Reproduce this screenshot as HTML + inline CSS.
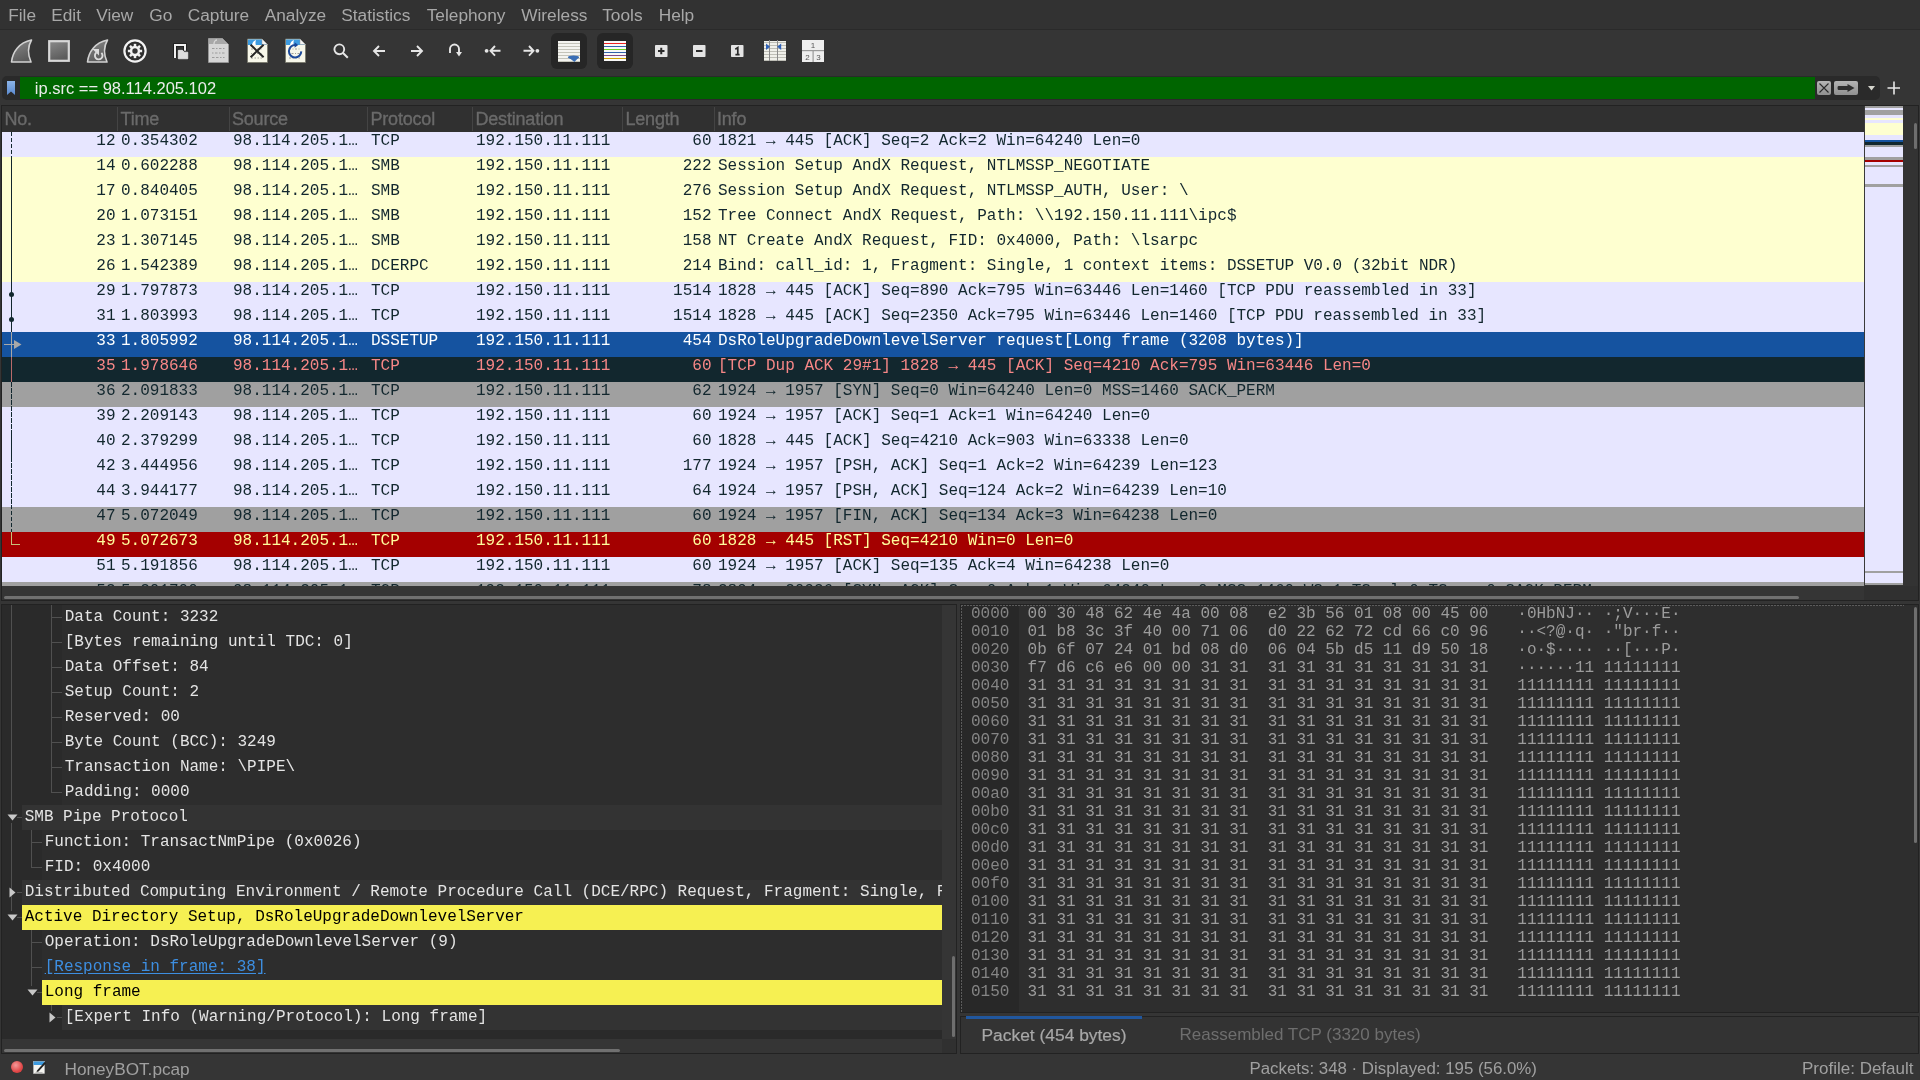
<!DOCTYPE html><html><head><meta charset="utf-8"><title>Wireshark</title><style>
*{margin:0;padding:0;box-sizing:border-box}
html,body{width:1920px;height:1080px;overflow:hidden;background:#353535}
body{position:relative;font-family:"Liberation Sans",sans-serif;-webkit-font-smoothing:antialiased}
.a{position:absolute}
.m{font-family:"Liberation Mono",monospace;font-size:16px;white-space:pre;line-height:18px}
.s{font-family:"Liberation Sans",sans-serif;white-space:pre}
.menu{font-size:17.3px;color:#a8a8a8;line-height:20px}
.hd{font-size:16.8px;color:#6a6a6a;line-height:20px;-webkit-text-stroke:0.35px #6a6a6a}
.row{position:absolute;left:2px;width:1862px;height:25px}
</style></head><body><div class="a" style="left:0;top:0;width:1920px;height:1080px;will-change:transform"><div class="a" style="left:0px;top:0px;width:1920px;height:29px;background:#323232"></div><div class="a" style="left:0px;top:29px;width:1920px;height:1px;background:#2a2a2a"></div><div class="a s menu" style="left:8.2px;top:5.2px;">File</div><div class="a s menu" style="left:51.2px;top:5.2px;">Edit</div><div class="a s menu" style="left:96.2px;top:5.2px;">View</div><div class="a s menu" style="left:149.2px;top:5.2px;">Go</div><div class="a s menu" style="left:187.7px;top:5.2px;">Capture</div><div class="a s menu" style="left:264.7px;top:5.2px;">Analyze</div><div class="a s menu" style="left:341.2px;top:5.2px;">Statistics</div><div class="a s menu" style="left:426.7px;top:5.2px;">Telephony</div><div class="a s menu" style="left:521.2px;top:5.2px;">Wireless</div><div class="a s menu" style="left:602.2px;top:5.2px;">Tools</div><div class="a s menu" style="left:658.7px;top:5.2px;">Help</div><svg class="a" style="left:10px;top:39px" width="23" height="24" viewBox="0 0 23 24"><defs><linearGradient id="gf" x1="0" y1="0" x2="0.4" y2="1"><stop offset="0" stop-color="#8a8a8a"/><stop offset="1" stop-color="#5c5c5c"/></linearGradient></defs><path d="M1.5,23 C2.5,13 9,3.5 21.5,1 C18,7 17.5,15 21,23 Z" fill="url(#gf)" stroke="#d2d2d2" stroke-width="1.6" stroke-linejoin="round"/></svg><svg class="a" style="left:48px;top:40px" width="22" height="22" viewBox="0 0 22 22"><defs><linearGradient id="gf" x1="0" y1="0" x2="0.4" y2="1"><stop offset="0" stop-color="#8a8a8a"/><stop offset="1" stop-color="#5c5c5c"/></linearGradient></defs><rect x="1.2" y="1.2" width="19.6" height="19.6" fill="url(#gf)" stroke="#d8d8d8" stroke-width="2.2"/></svg><svg class="a" style="left:86px;top:39px" width="23" height="24" viewBox="0 0 23 24"><defs><linearGradient id="gf" x1="0" y1="0" x2="0.4" y2="1"><stop offset="0" stop-color="#8a8a8a"/><stop offset="1" stop-color="#5c5c5c"/></linearGradient></defs><path d="M1.5,23 C2.5,13 9,3.5 21.5,1 C18,7 17.5,15 21,23 Z" fill="url(#gf)" stroke="#d2d2d2" stroke-width="1.6" stroke-linejoin="round"/><path d="M15.4,13.9 A3.8,3.8 0 1 1 10.4,13.6" fill="none" stroke="#dcdcdc" stroke-width="1.9"/><path d="M6.5,10 L13,10 L13,16.5 Z" fill="#dcdcdc"/></svg><svg class="a" style="left:123px;top:39px" width="24" height="24" viewBox="0 0 24 24"><circle cx="12" cy="12" r="10.6" fill="#2e2e2e" stroke="#f4f4f4" stroke-width="2.2"/><circle cx="12" cy="12" r="5.2" fill="#f2f2f2"/><rect x="16.65" y="10.75" width="2.5" height="2.5" transform="rotate(0 17.90 12.00)" fill="#f2f2f2"/><rect x="14.92" y="14.92" width="2.5" height="2.5" transform="rotate(45 16.17 16.17)" fill="#f2f2f2"/><rect x="10.75" y="16.65" width="2.5" height="2.5" transform="rotate(90 12.00 17.90)" fill="#f2f2f2"/><rect x="6.58" y="14.92" width="2.5" height="2.5" transform="rotate(135 7.83 16.17)" fill="#f2f2f2"/><rect x="4.85" y="10.75" width="2.5" height="2.5" transform="rotate(180 6.10 12.00)" fill="#f2f2f2"/><rect x="6.58" y="6.58" width="2.5" height="2.5" transform="rotate(225 7.83 7.83)" fill="#f2f2f2"/><rect x="10.75" y="4.85" width="2.5" height="2.5" transform="rotate(270 12.00 6.10)" fill="#f2f2f2"/><rect x="14.92" y="6.58" width="2.5" height="2.5" transform="rotate(315 16.17 7.83)" fill="#f2f2f2"/><circle cx="12" cy="12" r="2.7" fill="#333"/></svg><svg class="a" style="left:173px;top:43px" width="17" height="17" viewBox="0 0 17 17"><path d="M2,15 V2 H12 V7.8" fill="none" stroke="#1c1c1c" stroke-width="3.6"/><path d="M2,15 V2 H12 V7.8" fill="none" stroke="#f0f0f0" stroke-width="2"/><path d="M4.5,6.5 H10 L11.5,8.5 H15.5 V16.5 H4.5 Z" fill="#1c1c1c"/><path d="M5.3,7.3 H9.6 L11,9.2 H14.8 V15.8 H5.3 Z" fill="#dedede" stroke="#eeeeee" stroke-width="0.8"/></svg><svg class="a" style="left:208px;top:38px" width="21" height="25" viewBox="0 0 21 25"><path d="M0.5,0.5 H14.5 L20.5,6.5 V24.5 H0.5 Z" fill="#d6d6d6" stroke="#9a9a9a" stroke-width="0.8"/><path d="M0.8,0.8 H14.3 L19.5,6 H0.8 Z" fill="#a8a8a8"/><path d="M6,6 C6,3 8,2 9,2" stroke="#d6d6d6" stroke-width="1.4" fill="none"/><g fill="none" stroke="#9c9c9c" stroke-width="1"><path d="M4,10.5 h2.5 M8,10.5 h1.5 M11,10.5 h2.5 M15,10.5 h1.5"/><path d="M4,15 h1.5 M7,15 h2.5 M11,15 h1.5 M14,15 h2.5"/><path d="M4,19.5 h2.5 M8,19.5 h2.5 M12,19.5 h1.5 M15,19.5 h1.5"/></g></svg><svg class="a" style="left:247px;top:38px" width="21" height="25" viewBox="0 0 21 25"><path d="M0.5,1 H15 L20.5,6.5 V24.5 H0.5 Z" fill="#f7f7ea" stroke="#77776a" stroke-width="0.8"/><path d="M1,1.5 H14.8 L19.8,6.5 V7 H1 Z" fill="#3d9be0"/><path d="M5,7 C5.4,4.4 6.8,2.6 9,2 C8.4,3.6 8.3,5.4 8.8,7 Z" fill="#ffffff"/><path d="M15,1 V6.5 H20.5 Z" fill="#f4f4f4" stroke="#999" stroke-width="0.5"/><g fill="none" stroke="#a0a098" stroke-width="1"><path d="M4,11 h2 M7.5,11 h1 M10,11 h2 M13.5,11 h1"/><path d="M4,15.5 h1 M6.5,15.5 h2 M10,15.5 h1 M12.5,15.5 h2"/><path d="M4,20 h2 M7.5,20 h1.5 M10.5,20 h1.5 M13.5,20 h1.5"/></g><path d="M3.6,6.8 L16.6,19.2 M16.6,6.8 L3.6,19.2" stroke="#262626" stroke-width="2"/></svg><svg class="a" style="left:285px;top:38px" width="21" height="25" viewBox="0 0 21 25"><path d="M0.5,1 H15 L20.5,6.5 V24.5 H0.5 Z" fill="#f7f7ea" stroke="#77776a" stroke-width="0.8"/><path d="M1,1.5 H14.8 L19.8,6.5 V7 H1 Z" fill="#3d9be0"/><path d="M5,7 C5.4,4.4 6.8,2.6 9,2 C8.4,3.6 8.3,5.4 8.8,7 Z" fill="#ffffff"/><path d="M15,1 V6.5 H20.5 Z" fill="#f4f4f4" stroke="#999" stroke-width="0.5"/><g fill="none" stroke="#a0a098" stroke-width="1"><path d="M4,11 h2 M7.5,11 h1 M10,11 h2 M13.5,11 h1"/><path d="M4,15.5 h1 M6.5,15.5 h2 M10,15.5 h1 M12.5,15.5 h2"/><path d="M4,20 h2 M7.5,20 h1.5 M10.5,20 h1.5 M13.5,20 h1.5"/></g><path d="M10.2,7 A6.2,6.2 0 1 0 16.3,13.4" fill="none" stroke="#1d4a9a" stroke-width="2"/><path d="M9.6,4.2 L13.2,7 L9.6,9.8 Z" fill="#1d4a9a"/></svg><svg class="a" style="left:333px;top:43px" width="16" height="16" viewBox="0 0 16 16"><circle cx="6.3" cy="6.3" r="4.9" fill="none" stroke="#e6e6e6" stroke-width="1.9"/><path d="M9.8,9.8 L14.8,14.8" stroke="#e6e6e6" stroke-width="2"/></svg><svg class="a" style="left:372px;top:44px" width="14" height="14" viewBox="0 0 14 14"><path d="M13,7 H2 M7,2 L2,7 L7,12" fill="none" stroke="#e6e6e6" stroke-width="1.9"/></svg><svg class="a" style="left:410px;top:44px" width="14" height="14" viewBox="0 0 14 14"><path d="M1,7 H12 M7,2 L12,7 L7,12" fill="none" stroke="#e6e6e6" stroke-width="1.9"/></svg><svg class="a" style="left:448px;top:43px" width="14" height="15" viewBox="0 0 14 15"><path d="M2,10 V6 A4.5,4.5 0 0 1 11,6 V9" fill="none" stroke="#e6e6e6" stroke-width="1.9"/><path d="M8,9 H14 L11,13.5 Z" fill="#e6e6e6"/></svg><svg class="a" style="left:484px;top:44px" width="18" height="14" viewBox="0 0 18 14"><circle cx="2.6" cy="6.8" r="1.9" fill="#e6e6e6"/><path d="M16.5,6.8 H6.5 M11,2 L6.5,6.8 L11,11.6" fill="none" stroke="#e6e6e6" stroke-width="1.9"/></svg><svg class="a" style="left:522px;top:44px" width="18" height="14" viewBox="0 0 18 14"><circle cx="15.4" cy="6.8" r="1.9" fill="#e6e6e6"/><path d="M1.5,6.8 H11.5 M7,2 L11.5,6.8 L7,11.6" fill="none" stroke="#e6e6e6" stroke-width="1.9"/></svg><div class="a" style="left:551px;top:33px;width:36px;height:36px;background:#262626;border-radius:6px"></div><svg class="a" style="left:558px;top:41px" width="22" height="21" viewBox="0 0 22 21"><rect x="0" y="0" width="22" height="20" fill="#f4f4f0"/><rect x="0" y="2" width="22" height="1" fill="#c4c4ba"/><rect x="0" y="5" width="22" height="1" fill="#c4c4ba"/><rect x="0" y="8" width="22" height="1" fill="#c4c4ba"/><rect x="0" y="11" width="22" height="1" fill="#c4c4ba"/><rect x="0" y="14" width="22" height="1" fill="#c4c4ba"/><rect x="0" y="17" width="22" height="1" fill="#c4c4ba"/><rect x="0" y="20" width="22" height="1" fill="#c4c4ba"/><path d="M10,16 H21 L16.5,21 Z" fill="#3a6eb5"/><ellipse cx="15.5" cy="16.2" rx="5.6" ry="1.8" fill="#3a6eb5"/></svg><div class="a" style="left:597px;top:33px;width:36px;height:36px;background:#262626;border-radius:6px"></div><svg class="a" style="left:604px;top:41px" width="22" height="21" viewBox="0 0 22 21"><rect x="0" y="0" width="22" height="20" fill="#f8f8f8"/><rect x="0" y="2" width="22" height="1" fill="#ee2222"/><rect x="0" y="5" width="22" height="1" fill="#3062aa"/><rect x="0" y="8" width="22" height="1" fill="#6cd020"/><rect x="0" y="11" width="22" height="1" fill="#3062aa"/><rect x="0" y="14" width="22" height="1" fill="#804888"/><rect x="0" y="17" width="22" height="1" fill="#d0a000"/></svg><svg class="a" style="left:655px;top:45px" width="13" height="12" viewBox="0 0 13 12"><rect x="0" y="0" width="12.5" height="12" rx="0.8" fill="#e4e4e4"/><path d="M3,6 H9.5 M6.25,2.8 V9.2" stroke="#2a2a2a" stroke-width="2"/></svg><svg class="a" style="left:693px;top:45px" width="13" height="12" viewBox="0 0 13 12"><rect x="0" y="0" width="12.5" height="12" rx="0.8" fill="#e4e4e4"/><path d="M3,6 H9.5" stroke="#2a2a2a" stroke-width="2"/></svg><svg class="a" style="left:731px;top:45px" width="13" height="12" viewBox="0 0 13 12"><rect x="0" y="0" width="12.5" height="12" rx="0.8" fill="#e4e4e4"/><path d="M4.3,4.2 L6.8,2.6 V9.6 M4.4,9.6 H8.6" fill="none" stroke="#2a2a2a" stroke-width="1.7"/></svg><svg class="a" style="left:764px;top:40px" width="22" height="21" viewBox="0 0 22 21"><rect x="0" y="1" width="22" height="20" fill="#f0f0ea"/><rect x="0" y="2" width="22" height="0.9" fill="#b8b8b0"/><rect x="0" y="5" width="22" height="0.9" fill="#b8b8b0"/><rect x="0" y="8" width="22" height="0.9" fill="#b8b8b0"/><rect x="0" y="11" width="22" height="0.9" fill="#b8b8b0"/><rect x="0" y="14" width="22" height="0.9" fill="#b8b8b0"/><rect x="0" y="17" width="22" height="0.9" fill="#b8b8b0"/><rect x="0" y="20" width="22" height="0.9" fill="#b8b8b0"/><rect x="5" y="0" width="1" height="21" fill="#8a8a8a"/><rect x="13" y="0" width="1" height="21" fill="#8a8a8a"/><path d="M2,3.5 L6,6.7 L2,9.9 Z" fill="#2f62b8"/><path d="M17.2,3.5 L13.2,6.7 L17.2,9.9 Z" fill="#2f62b8"/></svg><svg class="a" style="left:802px;top:40px" width="22" height="22" viewBox="0 0 22 22"><rect x="0" y="0" width="22" height="22" fill="#eeeeee"/><rect x="0" y="10" width="22" height="1.2" fill="#999"/><rect x="10.5" y="10" width="1.2" height="12" fill="#999"/><text x="11" y="8.2" font-family="Liberation Sans" font-size="8" fill="#555" text-anchor="middle">1</text><text x="5.5" y="19.5" font-family="Liberation Sans" font-size="8" fill="#555" text-anchor="middle">2</text><text x="16.5" y="19.5" font-family="Liberation Sans" font-size="8" fill="#555" text-anchor="middle">3</text></svg><div class="a" style="left:2px;top:76px;width:1878px;height:24px;background:#2a2a2a;border-radius:5px"></div><svg class="a" style="left:7px;top:81px" width="8" height="14" viewBox="0 0 8 14"><defs><linearGradient id="bm" x1="0" y1="0" x2="0" y2="1"><stop offset="0" stop-color="#8cb4e8"/><stop offset="1" stop-color="#5a8ad0"/></linearGradient></defs><path d="M0,0 H8 V14 L4,10.5 L0,14 Z" fill="url(#bm)"/></svg><div class="a" style="left:20px;top:77px;width:1795px;height:22px;background:#006500"></div><div class="a s" style="left:34.8px;top:78px;font-size:16.5px;line-height:20px;color:#ececec">ip.src == 98.114.205.102</div><svg class="a" style="left:1817px;top:81px" width="14" height="14" viewBox="0 0 14 14"><defs><linearGradient id="bt" x1="0" y1="0" x2="0" y2="1"><stop offset="0" stop-color="#b4b4b4"/><stop offset="1" stop-color="#909090"/></linearGradient></defs><rect x="0" y="0" width="14" height="14" rx="2" fill="url(#bt)"/><path d="M2.5,2.5 L11.5,11.5 M11.5,2.5 L2.5,11.5" stroke="#2a2a2a" stroke-width="1.1"/></svg><svg class="a" style="left:1834px;top:81px" width="24" height="14" viewBox="0 0 24 14"><rect x="0" y="0" width="24" height="14" rx="2" fill="url(#bt)"/><path d="M4.5,5 H13.5 V3 L20.5,7 L13.5,11 V9 H4.5 Q3.5,9 3.5,7 Q3.5,5 4.5,5 Z" fill="#2e2e2e"/></svg><svg class="a" style="left:1868px;top:86px" width="8" height="5" viewBox="0 0 8 5"><path d="M0,0 H7 L3.5,4.5 Z" fill="#d4d4cc"/></svg><svg class="a" style="left:1887px;top:81px" width="14" height="14" viewBox="0 0 14 14"><path d="M7,0.5 V13.5 M0.5,7 H13" stroke="#e8e8e8" stroke-width="1.6"/></svg><div class="a" style="left:1px;top:105px;width:1918px;height:496px;background:#353535;border:1px solid #222"></div><div class="a" style="left:2px;top:106px;width:1862px;height:26px;background:#303030"></div><div class="a" style="left:1864px;top:106px;width:1px;height:480px;background:#3a3a3a"></div><div class="a" style="left:1903px;top:106px;width:15px;height:480px;background:#333333"></div><div class="a" style="left:1864px;top:586px;width:54px;height:14px;background:#303030"></div><div class="a" style="left:117px;top:107px;width:1px;height:24px;background:#444"></div><div class="a" style="left:229px;top:107px;width:1px;height:24px;background:#444"></div><div class="a" style="left:367px;top:107px;width:1px;height:24px;background:#444"></div><div class="a" style="left:472px;top:107px;width:1px;height:24px;background:#444"></div><div class="a" style="left:622px;top:107px;width:1px;height:24px;background:#444"></div><div class="a" style="left:714px;top:107px;width:1px;height:24px;background:#444"></div><div class="a s hd" style="left:4.5px;top:109px;font-size:18px;letter-spacing:-0.2px">No.</div><div class="a s hd" style="left:120.5px;top:109px;font-size:18px;letter-spacing:-0.2px">Time</div><div class="a s hd" style="left:232px;top:109px;font-size:18px;letter-spacing:-0.2px">Source</div><div class="a s hd" style="left:370.5px;top:109px;font-size:18px;letter-spacing:-0.2px">Protocol</div><div class="a s hd" style="left:475.5px;top:109px;font-size:18px;letter-spacing:-0.2px">Destination</div><div class="a s hd" style="left:625.5px;top:109px;font-size:18px;letter-spacing:-0.2px">Length</div><div class="a s hd" style="left:717px;top:109px;font-size:18px;letter-spacing:-0.2px">Info</div><div class="a" style="left:2px;top:132px;width:1862px;height:454px;overflow:hidden"><div class="a" style="left:0;top:0px;width:1862px;height:25px;background:#e7e6ff;color:#12272e"><div class="a m" style="left:94.3px;top:0px;line-height:18px">12</div><div class="a m" style="left:119.0px;top:0px;line-height:18px">0.354302</div><div class="a m" style="left:231.0px;top:0px;line-height:18px">98.114.205.1…</div><div class="a m" style="left:369.0px;top:0px;line-height:18px">TCP</div><div class="a m" style="left:474.0px;top:0px;line-height:18px">192.150.11.111</div><div class="a m" style="left:690.3px;top:0px;line-height:18px">60</div><div class="a m" style="left:716.0px;top:0px;line-height:18px">1821 → 445 [ACK] Seq=2 Ack=2 Win=64240 Len=0</div></div><div class="a" style="left:0;top:25px;width:1862px;height:25px;background:#feffd0;color:#12272e"><div class="a m" style="left:94.3px;top:0px;line-height:18px">14</div><div class="a m" style="left:119.0px;top:0px;line-height:18px">0.602288</div><div class="a m" style="left:231.0px;top:0px;line-height:18px">98.114.205.1…</div><div class="a m" style="left:369.0px;top:0px;line-height:18px">SMB</div><div class="a m" style="left:474.0px;top:0px;line-height:18px">192.150.11.111</div><div class="a m" style="left:680.7px;top:0px;line-height:18px">222</div><div class="a m" style="left:716.0px;top:0px;line-height:18px">Session Setup AndX Request, NTLMSSP_NEGOTIATE</div></div><div class="a" style="left:0;top:50px;width:1862px;height:25px;background:#feffd0;color:#12272e"><div class="a m" style="left:94.3px;top:0px;line-height:18px">17</div><div class="a m" style="left:119.0px;top:0px;line-height:18px">0.840405</div><div class="a m" style="left:231.0px;top:0px;line-height:18px">98.114.205.1…</div><div class="a m" style="left:369.0px;top:0px;line-height:18px">SMB</div><div class="a m" style="left:474.0px;top:0px;line-height:18px">192.150.11.111</div><div class="a m" style="left:680.7px;top:0px;line-height:18px">276</div><div class="a m" style="left:716.0px;top:0px;line-height:18px">Session Setup AndX Request, NTLMSSP_AUTH, User: \</div></div><div class="a" style="left:0;top:75px;width:1862px;height:25px;background:#feffd0;color:#12272e"><div class="a m" style="left:94.3px;top:0px;line-height:18px">20</div><div class="a m" style="left:119.0px;top:0px;line-height:18px">1.073151</div><div class="a m" style="left:231.0px;top:0px;line-height:18px">98.114.205.1…</div><div class="a m" style="left:369.0px;top:0px;line-height:18px">SMB</div><div class="a m" style="left:474.0px;top:0px;line-height:18px">192.150.11.111</div><div class="a m" style="left:680.7px;top:0px;line-height:18px">152</div><div class="a m" style="left:716.0px;top:0px;line-height:18px">Tree Connect AndX Request, Path: \\192.150.11.111\ipc$</div></div><div class="a" style="left:0;top:100px;width:1862px;height:25px;background:#feffd0;color:#12272e"><div class="a m" style="left:94.3px;top:0px;line-height:18px">23</div><div class="a m" style="left:119.0px;top:0px;line-height:18px">1.307145</div><div class="a m" style="left:231.0px;top:0px;line-height:18px">98.114.205.1…</div><div class="a m" style="left:369.0px;top:0px;line-height:18px">SMB</div><div class="a m" style="left:474.0px;top:0px;line-height:18px">192.150.11.111</div><div class="a m" style="left:680.7px;top:0px;line-height:18px">158</div><div class="a m" style="left:716.0px;top:0px;line-height:18px">NT Create AndX Request, FID: 0x4000, Path: \lsarpc</div></div><div class="a" style="left:0;top:125px;width:1862px;height:25px;background:#feffd0;color:#12272e"><div class="a m" style="left:94.3px;top:0px;line-height:18px">26</div><div class="a m" style="left:119.0px;top:0px;line-height:18px">1.542389</div><div class="a m" style="left:231.0px;top:0px;line-height:18px">98.114.205.1…</div><div class="a m" style="left:369.0px;top:0px;line-height:18px">DCERPC</div><div class="a m" style="left:474.0px;top:0px;line-height:18px">192.150.11.111</div><div class="a m" style="left:680.7px;top:0px;line-height:18px">214</div><div class="a m" style="left:716.0px;top:0px;line-height:18px">Bind: call_id: 1, Fragment: Single, 1 context items: DSSETUP V0.0 (32bit NDR)</div></div><div class="a" style="left:0;top:150px;width:1862px;height:25px;background:#e7e6ff;color:#12272e"><div class="a m" style="left:94.3px;top:0px;line-height:18px">29</div><div class="a m" style="left:119.0px;top:0px;line-height:18px">1.797873</div><div class="a m" style="left:231.0px;top:0px;line-height:18px">98.114.205.1…</div><div class="a m" style="left:369.0px;top:0px;line-height:18px">TCP</div><div class="a m" style="left:474.0px;top:0px;line-height:18px">192.150.11.111</div><div class="a m" style="left:671.1px;top:0px;line-height:18px">1514</div><div class="a m" style="left:716.0px;top:0px;line-height:18px">1828 → 445 [ACK] Seq=890 Ack=795 Win=63446 Len=1460 [TCP PDU reassembled in 33]</div></div><div class="a" style="left:0;top:175px;width:1862px;height:25px;background:#e7e6ff;color:#12272e"><div class="a m" style="left:94.3px;top:0px;line-height:18px">31</div><div class="a m" style="left:119.0px;top:0px;line-height:18px">1.803993</div><div class="a m" style="left:231.0px;top:0px;line-height:18px">98.114.205.1…</div><div class="a m" style="left:369.0px;top:0px;line-height:18px">TCP</div><div class="a m" style="left:474.0px;top:0px;line-height:18px">192.150.11.111</div><div class="a m" style="left:671.1px;top:0px;line-height:18px">1514</div><div class="a m" style="left:716.0px;top:0px;line-height:18px">1828 → 445 [ACK] Seq=2350 Ack=795 Win=63446 Len=1460 [TCP PDU reassembled in 33]</div></div><div class="a" style="left:0;top:200px;width:1862px;height:25px;background:#1553a0;color:#ffffff"><div class="a m" style="left:94.3px;top:0px;line-height:18px">33</div><div class="a m" style="left:119.0px;top:0px;line-height:18px">1.805992</div><div class="a m" style="left:231.0px;top:0px;line-height:18px">98.114.205.1…</div><div class="a m" style="left:369.0px;top:0px;line-height:18px">DSSETUP</div><div class="a m" style="left:474.0px;top:0px;line-height:18px">192.150.11.111</div><div class="a m" style="left:680.7px;top:0px;line-height:18px">454</div><div class="a m" style="left:716.0px;top:0px;line-height:18px">DsRoleUpgradeDownlevelServer request[Long frame (3208 bytes)]</div></div><div class="a" style="left:0;top:225px;width:1862px;height:25px;background:#12272e;color:#f78787"><div class="a m" style="left:94.3px;top:0px;line-height:18px">35</div><div class="a m" style="left:119.0px;top:0px;line-height:18px">1.978646</div><div class="a m" style="left:231.0px;top:0px;line-height:18px">98.114.205.1…</div><div class="a m" style="left:369.0px;top:0px;line-height:18px">TCP</div><div class="a m" style="left:474.0px;top:0px;line-height:18px">192.150.11.111</div><div class="a m" style="left:690.3px;top:0px;line-height:18px">60</div><div class="a m" style="left:716.0px;top:0px;line-height:18px">[TCP Dup ACK 29#1] 1828 → 445 [ACK] Seq=4210 Ack=795 Win=63446 Len=0</div></div><div class="a" style="left:0;top:250px;width:1862px;height:25px;background:#a0a0a0;color:#12272e"><div class="a m" style="left:94.3px;top:0px;line-height:18px">36</div><div class="a m" style="left:119.0px;top:0px;line-height:18px">2.091833</div><div class="a m" style="left:231.0px;top:0px;line-height:18px">98.114.205.1…</div><div class="a m" style="left:369.0px;top:0px;line-height:18px">TCP</div><div class="a m" style="left:474.0px;top:0px;line-height:18px">192.150.11.111</div><div class="a m" style="left:690.3px;top:0px;line-height:18px">62</div><div class="a m" style="left:716.0px;top:0px;line-height:18px">1924 → 1957 [SYN] Seq=0 Win=64240 Len=0 MSS=1460 SACK_PERM</div></div><div class="a" style="left:0;top:275px;width:1862px;height:25px;background:#e7e6ff;color:#12272e"><div class="a m" style="left:94.3px;top:0px;line-height:18px">39</div><div class="a m" style="left:119.0px;top:0px;line-height:18px">2.209143</div><div class="a m" style="left:231.0px;top:0px;line-height:18px">98.114.205.1…</div><div class="a m" style="left:369.0px;top:0px;line-height:18px">TCP</div><div class="a m" style="left:474.0px;top:0px;line-height:18px">192.150.11.111</div><div class="a m" style="left:690.3px;top:0px;line-height:18px">60</div><div class="a m" style="left:716.0px;top:0px;line-height:18px">1924 → 1957 [ACK] Seq=1 Ack=1 Win=64240 Len=0</div></div><div class="a" style="left:0;top:300px;width:1862px;height:25px;background:#e7e6ff;color:#12272e"><div class="a m" style="left:94.3px;top:0px;line-height:18px">40</div><div class="a m" style="left:119.0px;top:0px;line-height:18px">2.379299</div><div class="a m" style="left:231.0px;top:0px;line-height:18px">98.114.205.1…</div><div class="a m" style="left:369.0px;top:0px;line-height:18px">TCP</div><div class="a m" style="left:474.0px;top:0px;line-height:18px">192.150.11.111</div><div class="a m" style="left:690.3px;top:0px;line-height:18px">60</div><div class="a m" style="left:716.0px;top:0px;line-height:18px">1828 → 445 [ACK] Seq=4210 Ack=903 Win=63338 Len=0</div></div><div class="a" style="left:0;top:325px;width:1862px;height:25px;background:#e7e6ff;color:#12272e"><div class="a m" style="left:94.3px;top:0px;line-height:18px">42</div><div class="a m" style="left:119.0px;top:0px;line-height:18px">3.444956</div><div class="a m" style="left:231.0px;top:0px;line-height:18px">98.114.205.1…</div><div class="a m" style="left:369.0px;top:0px;line-height:18px">TCP</div><div class="a m" style="left:474.0px;top:0px;line-height:18px">192.150.11.111</div><div class="a m" style="left:680.7px;top:0px;line-height:18px">177</div><div class="a m" style="left:716.0px;top:0px;line-height:18px">1924 → 1957 [PSH, ACK] Seq=1 Ack=2 Win=64239 Len=123</div></div><div class="a" style="left:0;top:350px;width:1862px;height:25px;background:#e7e6ff;color:#12272e"><div class="a m" style="left:94.3px;top:0px;line-height:18px">44</div><div class="a m" style="left:119.0px;top:0px;line-height:18px">3.944177</div><div class="a m" style="left:231.0px;top:0px;line-height:18px">98.114.205.1…</div><div class="a m" style="left:369.0px;top:0px;line-height:18px">TCP</div><div class="a m" style="left:474.0px;top:0px;line-height:18px">192.150.11.111</div><div class="a m" style="left:690.3px;top:0px;line-height:18px">64</div><div class="a m" style="left:716.0px;top:0px;line-height:18px">1924 → 1957 [PSH, ACK] Seq=124 Ack=2 Win=64239 Len=10</div></div><div class="a" style="left:0;top:375px;width:1862px;height:25px;background:#a0a0a0;color:#12272e"><div class="a m" style="left:94.3px;top:0px;line-height:18px">47</div><div class="a m" style="left:119.0px;top:0px;line-height:18px">5.072049</div><div class="a m" style="left:231.0px;top:0px;line-height:18px">98.114.205.1…</div><div class="a m" style="left:369.0px;top:0px;line-height:18px">TCP</div><div class="a m" style="left:474.0px;top:0px;line-height:18px">192.150.11.111</div><div class="a m" style="left:690.3px;top:0px;line-height:18px">60</div><div class="a m" style="left:716.0px;top:0px;line-height:18px">1924 → 1957 [FIN, ACK] Seq=134 Ack=3 Win=64238 Len=0</div></div><div class="a" style="left:0;top:400px;width:1862px;height:25px;background:#a40000;color:#fffc9c"><div class="a m" style="left:94.3px;top:0px;line-height:18px">49</div><div class="a m" style="left:119.0px;top:0px;line-height:18px">5.072673</div><div class="a m" style="left:231.0px;top:0px;line-height:18px">98.114.205.1…</div><div class="a m" style="left:369.0px;top:0px;line-height:18px">TCP</div><div class="a m" style="left:474.0px;top:0px;line-height:18px">192.150.11.111</div><div class="a m" style="left:690.3px;top:0px;line-height:18px">60</div><div class="a m" style="left:716.0px;top:0px;line-height:18px">1828 → 445 [RST] Seq=4210 Win=0 Len=0</div></div><div class="a" style="left:0;top:425px;width:1862px;height:25px;background:#e7e6ff;color:#12272e"><div class="a m" style="left:94.3px;top:0px;line-height:18px">51</div><div class="a m" style="left:119.0px;top:0px;line-height:18px">5.191856</div><div class="a m" style="left:231.0px;top:0px;line-height:18px">98.114.205.1…</div><div class="a m" style="left:369.0px;top:0px;line-height:18px">TCP</div><div class="a m" style="left:474.0px;top:0px;line-height:18px">192.150.11.111</div><div class="a m" style="left:690.3px;top:0px;line-height:18px">60</div><div class="a m" style="left:716.0px;top:0px;line-height:18px">1924 → 1957 [ACK] Seq=135 Ack=4 Win=64238 Len=0</div></div><div class="a" style="left:0;top:450px;width:1862px;height:25px;background:#a0a0a0;color:#12272e"><div class="a m" style="left:94.3px;top:0px;line-height:18px">53</div><div class="a m" style="left:119.0px;top:0px;line-height:18px">5.201700</div><div class="a m" style="left:231.0px;top:0px;line-height:18px">98.114.205.1…</div><div class="a m" style="left:369.0px;top:0px;line-height:18px">TCP</div><div class="a m" style="left:474.0px;top:0px;line-height:18px">192.150.11.111</div><div class="a m" style="left:690.3px;top:0px;line-height:18px">78</div><div class="a m" style="left:716.0px;top:0px;line-height:18px">3894 → 20936 [SYN, ACK] Seq=0 Ack=1 Win=64240 Len=0 MSS=1460 WS=1 TSval=0 TSecr=0 SACK_PERM</div></div></div><div class="a" style="left:11px;top:132px;width:1px;height:25px;background:repeating-linear-gradient(#12272e 0 4.5px,transparent 4.5px 6px)"></div><div class="a" style="left:11px;top:157px;width:1px;height:175px;background:#12272e"></div><div class="a" style="left:9px;top:292.0px;width:5px;height:5px;border-radius:50%;background:#12272e"></div><div class="a" style="left:9px;top:317.0px;width:5px;height:5px;border-radius:50%;background:#12272e"></div><div class="a" style="left:11px;top:332px;width:1px;height:25px;background:#a8a8a8"></div><div class="a" style="left:4px;top:344px;width:11px;height:1px;background:#a8a8a8"></div><svg class="a" style="left:14px;top:340px" width="8" height="9" viewBox="0 0 8 9"><path d="M0,0 L7.5,4.5 L0,9 Z" fill="#a8a8a8"/></svg><div class="a" style="left:11px;top:357px;width:1px;height:25px;background:#b86a6a"></div><div class="a" style="left:11px;top:382px;width:1px;height:50px;background:repeating-linear-gradient(#12272e 0 4.5px,transparent 4.5px 6px)"></div><div class="a" style="left:11px;top:432px;width:1px;height:25px;background:#12272e"></div><div class="a" style="left:11px;top:457px;width:1px;height:75px;background:repeating-linear-gradient(#12272e 0 4.5px,transparent 4.5px 6px)"></div><div class="a" style="left:11px;top:532px;width:1px;height:13px;background:#c8c07a"></div><div class="a" style="left:11px;top:544px;width:9px;height:1px;background:#c8c07a"></div><div class="a" style="left:1865px;top:106px;width:38px;height:2px;background:#a0a0a0"></div><div class="a" style="left:1865px;top:108px;width:38px;height:2px;background:#e7e6ff"></div><div class="a" style="left:1865px;top:110px;width:38px;height:4.7px;background:#a0a0a0"></div><div class="a" style="left:1865px;top:114.7px;width:38px;height:3.3px;background:#e7e6ff"></div><div class="a" style="left:1865px;top:118px;width:38px;height:2px;background:#feffd0"></div><div class="a" style="left:1865px;top:120px;width:38px;height:3px;background:#e7e6ff"></div><div class="a" style="left:1865px;top:123px;width:38px;height:12px;background:#feffd0"></div><div class="a" style="left:1865px;top:135px;width:38px;height:5px;background:#e7e6ff"></div><div class="a" style="left:1865px;top:140px;width:38px;height:2px;background:#1553a0"></div><div class="a" style="left:1865px;top:142px;width:38px;height:2.7px;background:#12272e"></div><div class="a" style="left:1865px;top:144.7px;width:38px;height:1.9px;background:#a0a0a0"></div><div class="a" style="left:1865px;top:146.6px;width:38px;height:10.4px;background:#e7e6ff"></div><div class="a" style="left:1865px;top:157px;width:38px;height:3px;background:#a0a0a0"></div><div class="a" style="left:1865px;top:160px;width:38px;height:2px;background:#a40000"></div><div class="a" style="left:1865px;top:162px;width:38px;height:3px;background:#e7e6ff"></div><div class="a" style="left:1865px;top:165px;width:38px;height:2px;background:#a0a0a0"></div><div class="a" style="left:1865px;top:167px;width:38px;height:17px;background:#e7e6ff"></div><div class="a" style="left:1865px;top:184px;width:38px;height:2.7px;background:#a0a0a0"></div><div class="a" style="left:1865px;top:186.7px;width:38px;height:384.3px;background:#e7e6ff"></div><div class="a" style="left:1865px;top:571px;width:38px;height:2px;background:#a0a0a0"></div><div class="a" style="left:1865px;top:573px;width:38px;height:10px;background:#e7e6ff"></div><div class="a" style="left:1865px;top:583px;width:38px;height:2px;background:#a0a0a0"></div><div class="a" style="left:1914px;top:123px;width:3px;height:26px;background:#6e6e6e;border-radius:2px"></div><div class="a" style="left:4px;top:596px;width:1795px;height:3px;background:#707070;border-radius:2px"></div><div class="a" style="left:1px;top:604px;width:956px;height:450px;background:#353535;border:1px solid #222"></div><div class="a" style="left:2px;top:605px;width:940px;height:434px;background:#2a2a2a"></div><div class="a" style="left:942px;top:605px;width:14px;height:434px;background:#353535"></div><div class="a" style="left:942px;top:1039px;width:14px;height:14px;background:#303030"></div><div class="a" style="left:2px;top:605px;width:940px;height:434px;overflow:hidden"><div class="a" style="left:60px;top:0px;width:881px;height:25px;background:#2d2d2d"></div><div class="a m" style="left:62.7px;top:2.8px;color:#e4e4e4;">Data Count: 3232</div><div class="a" style="left:60px;top:25px;width:881px;height:25px;background:#2d2d2d"></div><div class="a m" style="left:62.7px;top:27.8px;color:#e4e4e4;">[Bytes remaining until TDC: 0]</div><div class="a" style="left:60px;top:50px;width:881px;height:25px;background:#2d2d2d"></div><div class="a m" style="left:62.7px;top:52.8px;color:#e4e4e4;">Data Offset: 84</div><div class="a" style="left:60px;top:75px;width:881px;height:25px;background:#2d2d2d"></div><div class="a m" style="left:62.7px;top:77.8px;color:#e4e4e4;">Setup Count: 2</div><div class="a" style="left:60px;top:100px;width:881px;height:25px;background:#2d2d2d"></div><div class="a m" style="left:62.7px;top:102.8px;color:#e4e4e4;">Reserved: 00</div><div class="a" style="left:60px;top:125px;width:881px;height:25px;background:#2d2d2d"></div><div class="a m" style="left:62.7px;top:127.8px;color:#e4e4e4;">Byte Count (BCC): 3249</div><div class="a" style="left:60px;top:150px;width:881px;height:25px;background:#2d2d2d"></div><div class="a m" style="left:62.7px;top:152.8px;color:#e4e4e4;">Transaction Name: \PIPE\</div><div class="a" style="left:60px;top:175px;width:881px;height:25px;background:#2d2d2d"></div><div class="a m" style="left:62.7px;top:177.8px;color:#e4e4e4;">Padding: 0000</div><div class="a" style="left:20px;top:200px;width:921px;height:25px;background:#333333"></div><div class="a m" style="left:22.7px;top:202.8px;color:#e4e4e4;">SMB Pipe Protocol</div><div class="a" style="left:40px;top:225px;width:901px;height:25px;background:#2d2d2d"></div><div class="a m" style="left:42.7px;top:227.8px;color:#e4e4e4;">Function: TransactNmPipe (0x0026)</div><div class="a" style="left:40px;top:250px;width:901px;height:25px;background:#2d2d2d"></div><div class="a m" style="left:42.7px;top:252.8px;color:#e4e4e4;">FID: 0x4000</div><div class="a" style="left:20px;top:275px;width:921px;height:25px;background:#333333"></div><div class="a m" style="left:22.7px;top:277.8px;color:#e4e4e4;">Distributed Computing Environment / Remote Procedure Call (DCE/RPC) Request, Fragment: Single, Frag Len: 3232, Auth Len: 0, Call: 1, Ctx: 0</div><div class="a" style="left:20px;top:300px;width:921px;height:25px;background:#f6f052"></div><div class="a m" style="left:22.7px;top:302.8px;color:#000000;">Active Directory Setup, DsRoleUpgradeDownlevelServer</div><div class="a" style="left:40px;top:325px;width:901px;height:25px;background:#2d2d2d"></div><div class="a m" style="left:42.7px;top:327.8px;color:#e4e4e4;">Operation: DsRoleUpgradeDownlevelServer (9)</div><div class="a" style="left:40px;top:350px;width:901px;height:25px;background:#2d2d2d"></div><div class="a m" style="left:42.7px;top:352.8px;color:#3d8ee0;text-decoration:underline;text-underline-offset:2px;">[Response in frame: 38]</div><div class="a" style="left:40px;top:375px;width:901px;height:25px;background:#f6f052"></div><div class="a m" style="left:42.7px;top:377.8px;color:#000000;">Long frame</div><div class="a" style="left:60px;top:400px;width:881px;height:25px;background:#333333"></div><div class="a m" style="left:62.7px;top:402.8px;color:#e4e4e4;">[Expert Info (Warning/Protocol): Long frame]</div></div><div class="a" style="left:11px;top:605px;width:1px;height:206px;background:#505050"></div><div class="a" style="left:11px;top:823px;width:1px;height:88px;background:#505050"></div><div class="a" style="left:51px;top:605px;width:1px;height:188px;background:#505050"></div><div class="a" style="left:51px;top:617px;width:11px;height:1px;background:#505050"></div><div class="a" style="left:51px;top:642px;width:11px;height:1px;background:#505050"></div><div class="a" style="left:51px;top:667px;width:11px;height:1px;background:#505050"></div><div class="a" style="left:51px;top:692px;width:11px;height:1px;background:#505050"></div><div class="a" style="left:51px;top:717px;width:11px;height:1px;background:#505050"></div><div class="a" style="left:51px;top:742px;width:11px;height:1px;background:#505050"></div><div class="a" style="left:51px;top:767px;width:11px;height:1px;background:#505050"></div><div class="a" style="left:51px;top:792px;width:11px;height:1px;background:#505050"></div><div class="a" style="left:31px;top:830px;width:1px;height:38px;background:#505050"></div><div class="a" style="left:31px;top:842px;width:11px;height:1px;background:#505050"></div><div class="a" style="left:31px;top:867px;width:11px;height:1px;background:#505050"></div><div class="a" style="left:31px;top:930px;width:1px;height:56px;background:#505050"></div><div class="a" style="left:31px;top:942px;width:11px;height:1px;background:#505050"></div><div class="a" style="left:31px;top:967px;width:11px;height:1px;background:#505050"></div><div class="a" style="left:51px;top:1005px;width:1px;height:6px;background:#505050"></div><div class="a" style="left:17px;top:817px;width:5px;height:1px;background:#505050"></div><div class="a" style="left:17px;top:892px;width:5px;height:1px;background:#505050"></div><div class="a" style="left:17px;top:917px;width:5px;height:1px;background:#505050"></div><div class="a" style="left:37px;top:992px;width:5px;height:1px;background:#505050"></div><div class="a" style="left:57px;top:1017px;width:5px;height:1px;background:#505050"></div><svg class="a" style="left:6.5px;top:813.5px" width="11" height="7" viewBox="0 0 11 7"><path d="M0.5,0.5 H10.5 L5.5,6.5 Z" fill="#c8c8c8"/></svg><svg class="a" style="left:8.5px;top:886.5px" width="7" height="11" viewBox="0 0 7 11"><path d="M0.5,0.5 L6.5,5.5 L0.5,10.5 Z" fill="#c8c8c8"/></svg><svg class="a" style="left:6.5px;top:913.5px" width="11" height="7" viewBox="0 0 11 7"><path d="M0.5,0.5 H10.5 L5.5,6.5 Z" fill="#c8c8c8"/></svg><svg class="a" style="left:26.5px;top:989px" width="11" height="7" viewBox="0 0 11 7"><path d="M0.5,0.5 H10.5 L5.5,6.5 Z" fill="#c8c8c8"/></svg><svg class="a" style="left:48.5px;top:1012px" width="7" height="11" viewBox="0 0 7 11"><path d="M0.5,0.5 L6.5,5.5 L0.5,10.5 Z" fill="#c8c8c8"/></svg><div class="a" style="left:952px;top:956px;width:3px;height:81px;background:#6e6e6e;border-radius:2px"></div><div class="a" style="left:4px;top:1049px;width:616px;height:3px;background:#707070;border-radius:2px"></div><div class="a" style="left:960px;top:604px;width:959px;height:409px;background:#2e2e2e;border:1px solid #222"></div><div class="a" style="left:961px;top:605px;width:58px;height:407px;background:#282828"></div><div class="a" style="left:961px;top:605px;width:943px;height:1px;background:repeating-linear-gradient(90deg,#5c5c5c 0 2px,transparent 2px 3px)"></div><div class="a" style="left:961px;top:605px;width:1px;height:407px;background:repeating-linear-gradient(#5c5c5c 0 2px,transparent 2px 3px)"></div><div class="a m" style="left:971px;top:605px;color:#858585">0000</div><div class="a m" style="left:1027.6px;top:605px;color:#9c9c9c">00 30 48 62 4e 4a 00 08  e2 3b 56 01 08 00 45 00   ·0HbNJ·· ·;V···E·</div><div class="a m" style="left:971px;top:623px;color:#858585">0010</div><div class="a m" style="left:1027.6px;top:623px;color:#9c9c9c">01 b8 3c 3f 40 00 71 06  d0 22 62 72 cd 66 c0 96   ··&lt;?@·q· ·"br·f··</div><div class="a m" style="left:971px;top:641px;color:#858585">0020</div><div class="a m" style="left:1027.6px;top:641px;color:#9c9c9c">0b 6f 07 24 01 bd 08 d0  06 04 5b d5 11 d9 50 18   ·o·$···· ··[···P·</div><div class="a m" style="left:971px;top:659px;color:#858585">0030</div><div class="a m" style="left:1027.6px;top:659px;color:#9c9c9c">f7 d6 c6 e6 00 00 31 31  31 31 31 31 31 31 31 31   ······11 11111111</div><div class="a m" style="left:971px;top:677px;color:#858585">0040</div><div class="a m" style="left:1027.6px;top:677px;color:#9c9c9c">31 31 31 31 31 31 31 31  31 31 31 31 31 31 31 31   11111111 11111111</div><div class="a m" style="left:971px;top:695px;color:#858585">0050</div><div class="a m" style="left:1027.6px;top:695px;color:#9c9c9c">31 31 31 31 31 31 31 31  31 31 31 31 31 31 31 31   11111111 11111111</div><div class="a m" style="left:971px;top:713px;color:#858585">0060</div><div class="a m" style="left:1027.6px;top:713px;color:#9c9c9c">31 31 31 31 31 31 31 31  31 31 31 31 31 31 31 31   11111111 11111111</div><div class="a m" style="left:971px;top:731px;color:#858585">0070</div><div class="a m" style="left:1027.6px;top:731px;color:#9c9c9c">31 31 31 31 31 31 31 31  31 31 31 31 31 31 31 31   11111111 11111111</div><div class="a m" style="left:971px;top:749px;color:#858585">0080</div><div class="a m" style="left:1027.6px;top:749px;color:#9c9c9c">31 31 31 31 31 31 31 31  31 31 31 31 31 31 31 31   11111111 11111111</div><div class="a m" style="left:971px;top:767px;color:#858585">0090</div><div class="a m" style="left:1027.6px;top:767px;color:#9c9c9c">31 31 31 31 31 31 31 31  31 31 31 31 31 31 31 31   11111111 11111111</div><div class="a m" style="left:971px;top:785px;color:#858585">00a0</div><div class="a m" style="left:1027.6px;top:785px;color:#9c9c9c">31 31 31 31 31 31 31 31  31 31 31 31 31 31 31 31   11111111 11111111</div><div class="a m" style="left:971px;top:803px;color:#858585">00b0</div><div class="a m" style="left:1027.6px;top:803px;color:#9c9c9c">31 31 31 31 31 31 31 31  31 31 31 31 31 31 31 31   11111111 11111111</div><div class="a m" style="left:971px;top:821px;color:#858585">00c0</div><div class="a m" style="left:1027.6px;top:821px;color:#9c9c9c">31 31 31 31 31 31 31 31  31 31 31 31 31 31 31 31   11111111 11111111</div><div class="a m" style="left:971px;top:839px;color:#858585">00d0</div><div class="a m" style="left:1027.6px;top:839px;color:#9c9c9c">31 31 31 31 31 31 31 31  31 31 31 31 31 31 31 31   11111111 11111111</div><div class="a m" style="left:971px;top:857px;color:#858585">00e0</div><div class="a m" style="left:1027.6px;top:857px;color:#9c9c9c">31 31 31 31 31 31 31 31  31 31 31 31 31 31 31 31   11111111 11111111</div><div class="a m" style="left:971px;top:875px;color:#858585">00f0</div><div class="a m" style="left:1027.6px;top:875px;color:#9c9c9c">31 31 31 31 31 31 31 31  31 31 31 31 31 31 31 31   11111111 11111111</div><div class="a m" style="left:971px;top:893px;color:#858585">0100</div><div class="a m" style="left:1027.6px;top:893px;color:#9c9c9c">31 31 31 31 31 31 31 31  31 31 31 31 31 31 31 31   11111111 11111111</div><div class="a m" style="left:971px;top:911px;color:#858585">0110</div><div class="a m" style="left:1027.6px;top:911px;color:#9c9c9c">31 31 31 31 31 31 31 31  31 31 31 31 31 31 31 31   11111111 11111111</div><div class="a m" style="left:971px;top:929px;color:#858585">0120</div><div class="a m" style="left:1027.6px;top:929px;color:#9c9c9c">31 31 31 31 31 31 31 31  31 31 31 31 31 31 31 31   11111111 11111111</div><div class="a m" style="left:971px;top:947px;color:#858585">0130</div><div class="a m" style="left:1027.6px;top:947px;color:#9c9c9c">31 31 31 31 31 31 31 31  31 31 31 31 31 31 31 31   11111111 11111111</div><div class="a m" style="left:971px;top:965px;color:#858585">0140</div><div class="a m" style="left:1027.6px;top:965px;color:#9c9c9c">31 31 31 31 31 31 31 31  31 31 31 31 31 31 31 31   11111111 11111111</div><div class="a m" style="left:971px;top:983px;color:#858585">0150</div><div class="a m" style="left:1027.6px;top:983px;color:#9c9c9c">31 31 31 31 31 31 31 31  31 31 31 31 31 31 31 31   11111111 11111111</div><div class="a" style="left:1914px;top:607px;width:3px;height:236px;background:#6e6e6e;border-radius:2px"></div><div class="a" style="left:960px;top:1016px;width:959px;height:38px;background:#333333;border:1px solid #222"></div><div class="a" style="left:966px;top:1016px;width:176px;height:3px;background:#21579e"></div><div class="a s" style="left:981.5px;top:1025px;font-size:17.4px;-webkit-text-stroke:0.2px #a8a8a8;line-height:20px;color:#a8a8a8">Packet (454 bytes)</div><div class="a s" style="left:1179.5px;top:1025px;font-size:17px;line-height:20px;color:#6e6e6e">Reassembled TCP (3320 bytes)</div><div class="a" style="left:10.5px;top:1060.5px;width:12.5px;height:12.5px;border-radius:50%;background:radial-gradient(circle at 40% 35%,#f39a9a,#e04848 60%,#c83232)"></div><svg class="a" style="left:33px;top:1060px" width="14" height="14" viewBox="0 0 14 14"><rect x="0.5" y="1.5" width="11" height="12" fill="#f4f4f0" stroke="#bbb" stroke-width="0.6"/><rect x="0.5" y="1.5" width="11" height="3.5" fill="#3d9be0"/><path d="M4,10.5 L11.5,2 L13,3.3 L5.5,11.5 L3.5,12 Z" fill="#222"/><path d="M2.5,12.5 h7" stroke="#999" stroke-width="0.6"/></svg><div class="a s" style="left:64.5px;top:1059px;font-size:17.2px;line-height:20px;color:#a0a0a0">HoneyBOT.pcap</div><div class="a s" style="left:1249.5px;top:1059px;font-size:16.85px;line-height:20px;color:#a0a0a0">Packets: 348 · Displayed: 195 (56.0%)</div><div class="a s" style="left:1802px;top:1059px;font-size:17px;line-height:20px;color:#a0a0a0">Profile: Default</div></div></body></html>
